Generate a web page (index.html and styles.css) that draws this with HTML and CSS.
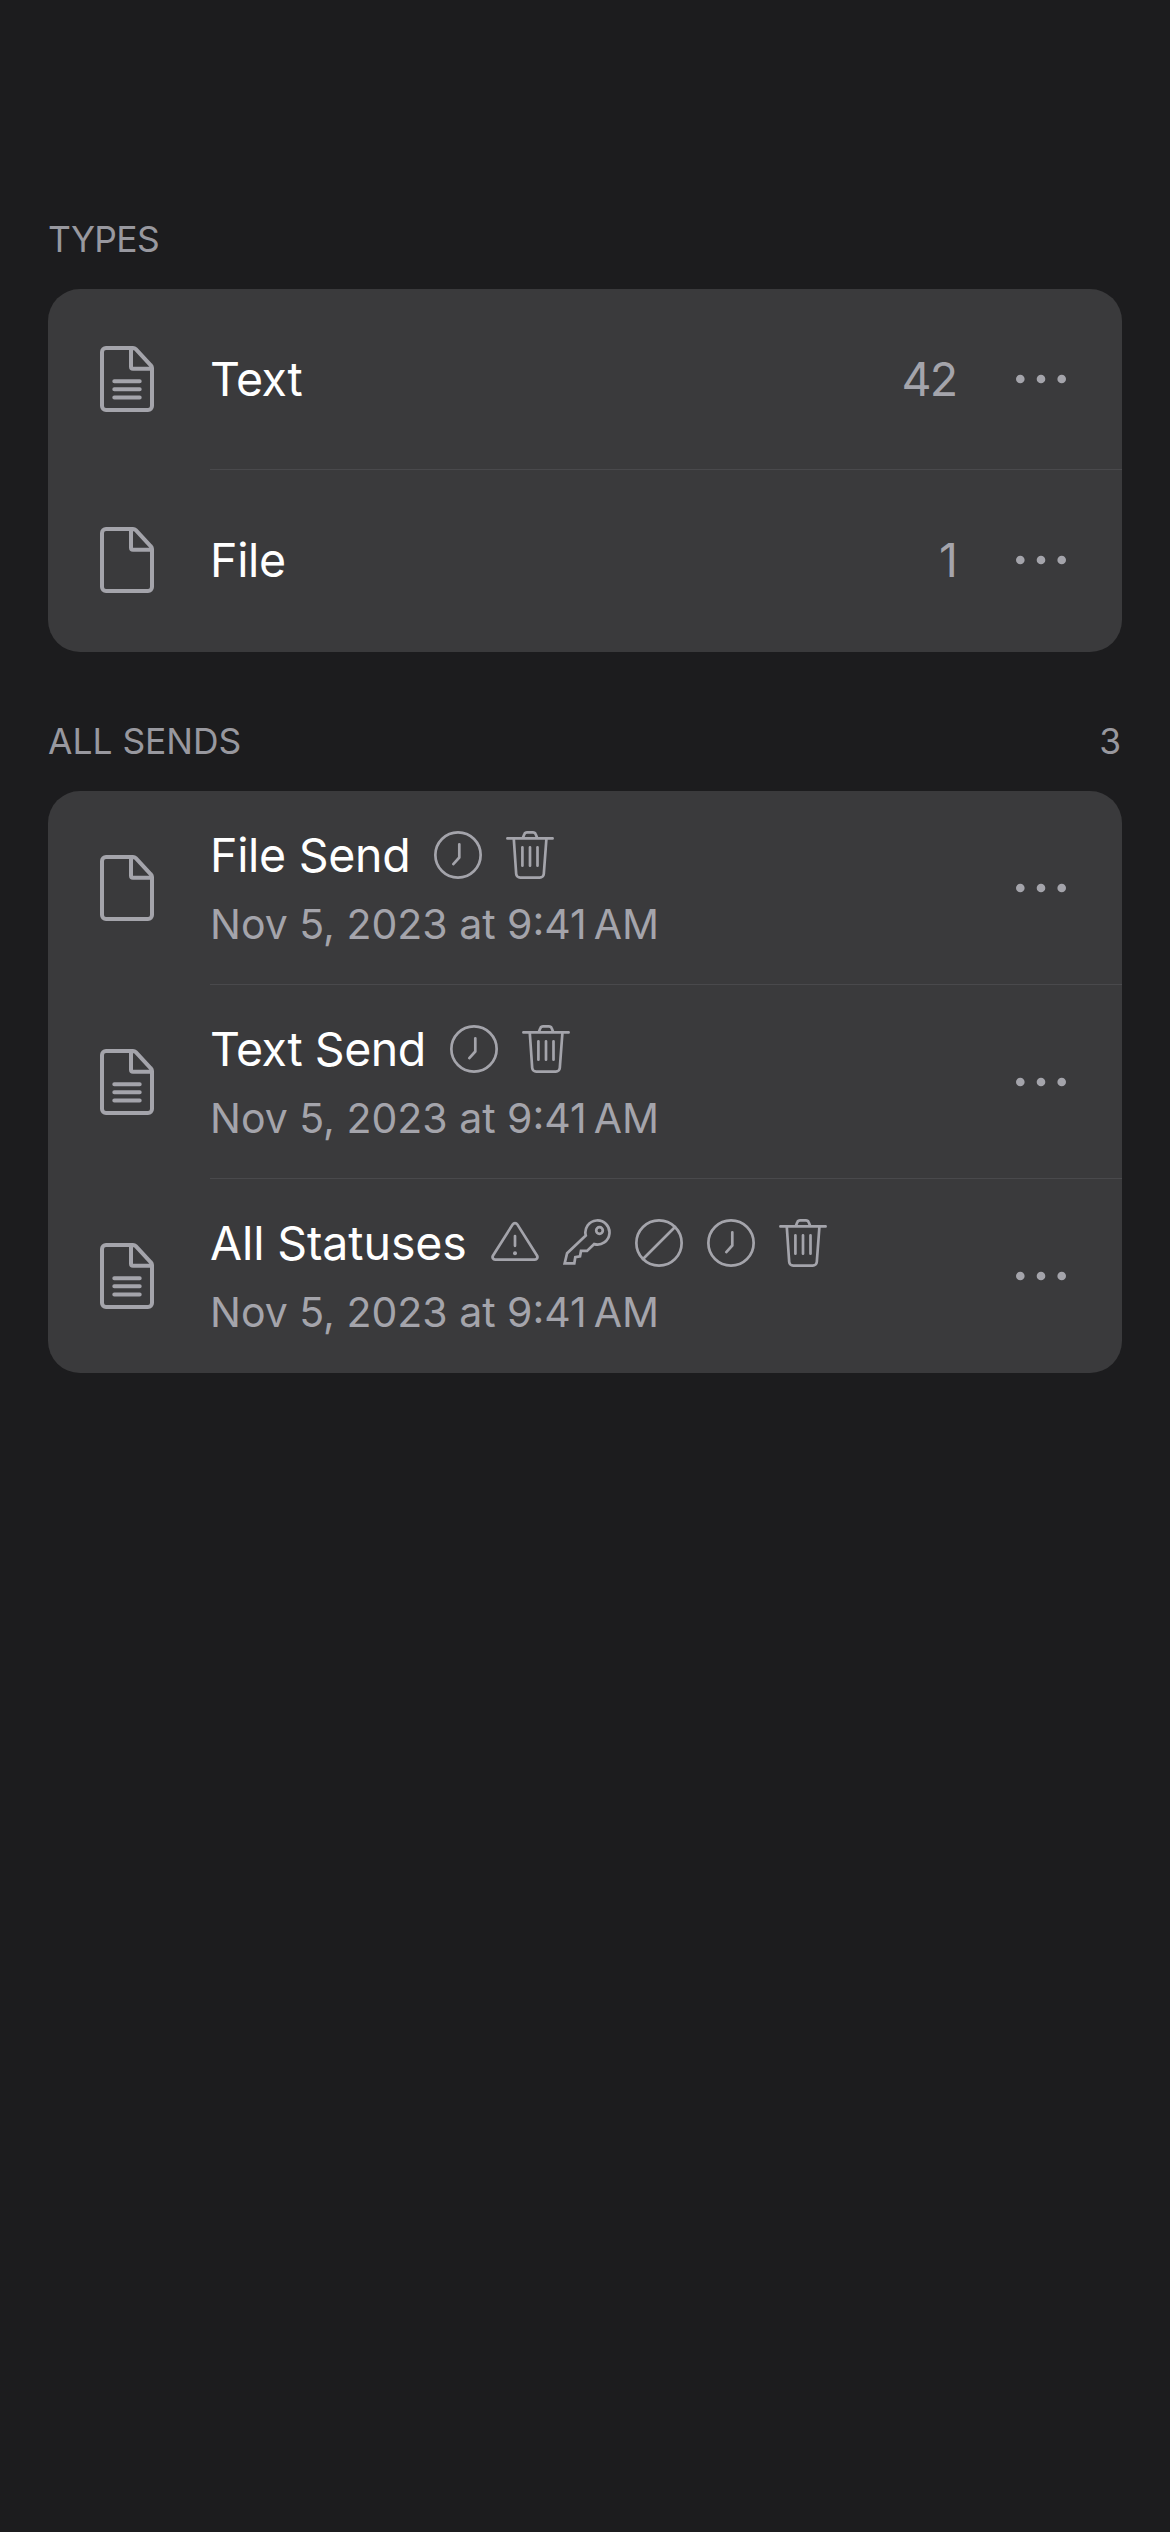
FILE: index.html
```html
<!DOCTYPE html>
<html lang="en">
<head>
<meta charset="utf-8">
<title>Sends</title>
<link rel="stylesheet" href="styles.css">
</head>
<body>
<svg class="sprite" aria-hidden="true">
  <symbol id="file" viewBox="0 0 54 66"><path d="M33 2H6a4 4 0 0 0-4 4v54a4 4 0 0 0 4 4h42a4 4 0 0 0 4-4V22.2a4 4 0 0 0-1.2-2.9L35.8 3.2A4 4 0 0 0 33 2zM31 2.5V20.700a2 2 0 0 0 2 2H51.500"/></symbol>
  <symbol id="text" viewBox="0 0 54 66"><use href="#file"/><path d="M14.300 35.200h25.400M14.300 43.300h25.400M14.300 51.500h25.400"/></symbol>
  <symbol id="clock" viewBox="0 0 48 48"><circle cx="24" cy="24" r="22.650"/><path d="M25.300 13.300v13.200l-6 6.600"/></symbol>
  <symbol id="trash" viewBox="0 0 48 48"><path d="M1.400 7.400h45.200M16.800 7l1.500-3.700a3 3 0 0 1 2.800-1.950h5.800a3 3 0 0 1 2.800 1.950L31.200 7M7.800 8l2.400 35a4 4 0 0 0 4 3.650h19.600a4 4 0 0 0 4-3.650l2.600-35M16.400 16.300v18.400M24 16.300v18.400M31.500 16.300v18.400"/></symbol>
  <symbol id="warn" viewBox="0 0 48 48"><path d="M21.700 5.400 1.900 36.700a2.600 2.600 0 0 0 2.200 3.900h39.800a2.600 2.600 0 0 0 2.200-3.900L26.300 5.400a2.750 2.750 0 0 0-4.600 0zM24 17v9.800"/><circle class="solid" cx="24" cy="34.300" r="2"/></symbol>
  <symbol id="key" viewBox="0 0 48 48"><path class="miter" d="M22.800 16.600 4.100 34.300 1.700 44.300H11.300L12.300 38.200 17 37.300 18 31.900H24L31.200 25.100A12.050 12.050 0 1 0 22.800 16.600z"/><circle cx="36.500" cy="11.500" r="3.300"/></symbol>
  <symbol id="ban" viewBox="0 0 48 48"><circle cx="24" cy="24" r="22.650"/><path d="M8 40 40 8"/></symbol>
  <symbol id="more" viewBox="0 0 50 10"><circle class="solid" cx="4.300" cy="5" r="4.300"/><circle class="solid" cx="25" cy="5" r="4.300"/><circle class="solid" cx="45.700" cy="5" r="4.300"/></symbol>
</svg>
<main class="page">
  <section>
    <header class="section-header"><span class="label label-types">TYPES</span></header>
    <div class="card types">
      <div class="row"><svg class="doc"><use href="#text"/></svg><div class="content"><span class="title tight">Text</span><span class="count">42</span><svg class="more"><use href="#more"/></svg></div></div>
      <div class="row"><svg class="doc"><use href="#file"/></svg><div class="content"><span class="title">File</span><span class="count">1</span><svg class="more"><use href="#more"/></svg></div></div>
    </div>
  </section>
  <section>
    <header class="section-header"><span class="label">ALL SENDS</span><span class="label">3</span></header>
    <div class="card sends">
      <div class="row"><svg class="doc"><use href="#file"/></svg><div class="content">
        <div class="details"><div class="heading"><span class="title">File Send</span><svg class="status"><use href="#clock"/></svg><svg class="status"><use href="#trash"/></svg></div><span class="date">Nov 5, 2023 at 9:41<span class="thin"></span>AM</span></div>
        <svg class="more"><use href="#more"/></svg></div></div>
      <div class="row"><svg class="doc"><use href="#text"/></svg><div class="content">
        <div class="details"><div class="heading"><span class="title tight">Text Send</span><svg class="status"><use href="#clock"/></svg><svg class="status"><use href="#trash"/></svg></div><span class="date">Nov 5, 2023 at 9:41<span class="thin"></span>AM</span></div>
        <svg class="more"><use href="#more"/></svg></div></div>
      <div class="row"><svg class="doc"><use href="#text"/></svg><div class="content">
        <div class="details"><div class="heading"><span class="title wide">All Statuses</span><svg class="status"><use href="#warn"/></svg><svg class="status"><use href="#key"/></svg><svg class="status"><use href="#ban"/></svg><svg class="status"><use href="#clock"/></svg><svg class="status"><use href="#trash"/></svg></div><span class="date">Nov 5, 2023 at 9:41<span class="thin"></span>AM</span></div>
        <svg class="more"><use href="#more"/></svg></div></div>
    </div>
  </section>
</main>
</body>
</html>
```
FILE: styles.css
```css
* { box-sizing: border-box; }
body { margin: 0; background: #1c1c1e; font-family: Inter, "Liberation Sans", sans-serif; color: #fff; }
.sprite { display: none; }
.page { min-height: 2532px; padding: 215px 48px 0; display: flex; flex-direction: column; gap: 65px; }
svg { flex: none; fill: none; stroke: #a4a4ab; stroke-width: 2.7; stroke-linecap: round; stroke-linejoin: round; }
.solid { fill: #a4a4ab; stroke: none; }
.miter { stroke-linejoin: miter; }
.section-header { height: 74px; padding: 0 1px 0 0; display: flex; justify-content: space-between; }
.label { color: #98989f; font-size: 35.4px; line-height: 50px; }
.label-types { letter-spacing: -0.6px; }
.card { background: #3a3a3c; border-radius: 32px; overflow: hidden; }
.types { height: 363px; }
.sends { height: 582px; }
.row { display: flex; align-items: center; padding-left: 52px; }
.types .row { height: 181px; }
.sends .row { height: 194px; }
.doc { width: 54px; height: 66px; margin-right: 56px; stroke-width: 4; }
.types .doc { margin-bottom: 1px; }
.content { flex: 1; height: 100%; display: flex; align-items: center; padding-right: 56px; border-bottom: 1px solid #49494c; }
.row:last-child .content { border-bottom-color: transparent; }
.title { font-size: 46.5px; line-height: 60px; letter-spacing: -0.3px; }
.tight { letter-spacing: -0.45px; }
.wide { letter-spacing: -0.1px; }
.count { margin-left: auto; margin-right: 60px; font-size: 46.5px; line-height: 60px; letter-spacing: -2px; color: #a4a4ab; }
.more { width: 50px; height: 10px; }
.details { flex: 1; display: flex; flex-direction: column; }
.heading { display: flex; align-items: center; gap: 24px; }
.status { width: 48px; height: 48px; }
.date { color: #a4a4ab; font-size: 41px; line-height: 52px; margin-top: 13px; white-space: nowrap; }
.thin { display: inline-block; width: 7px; }
```
